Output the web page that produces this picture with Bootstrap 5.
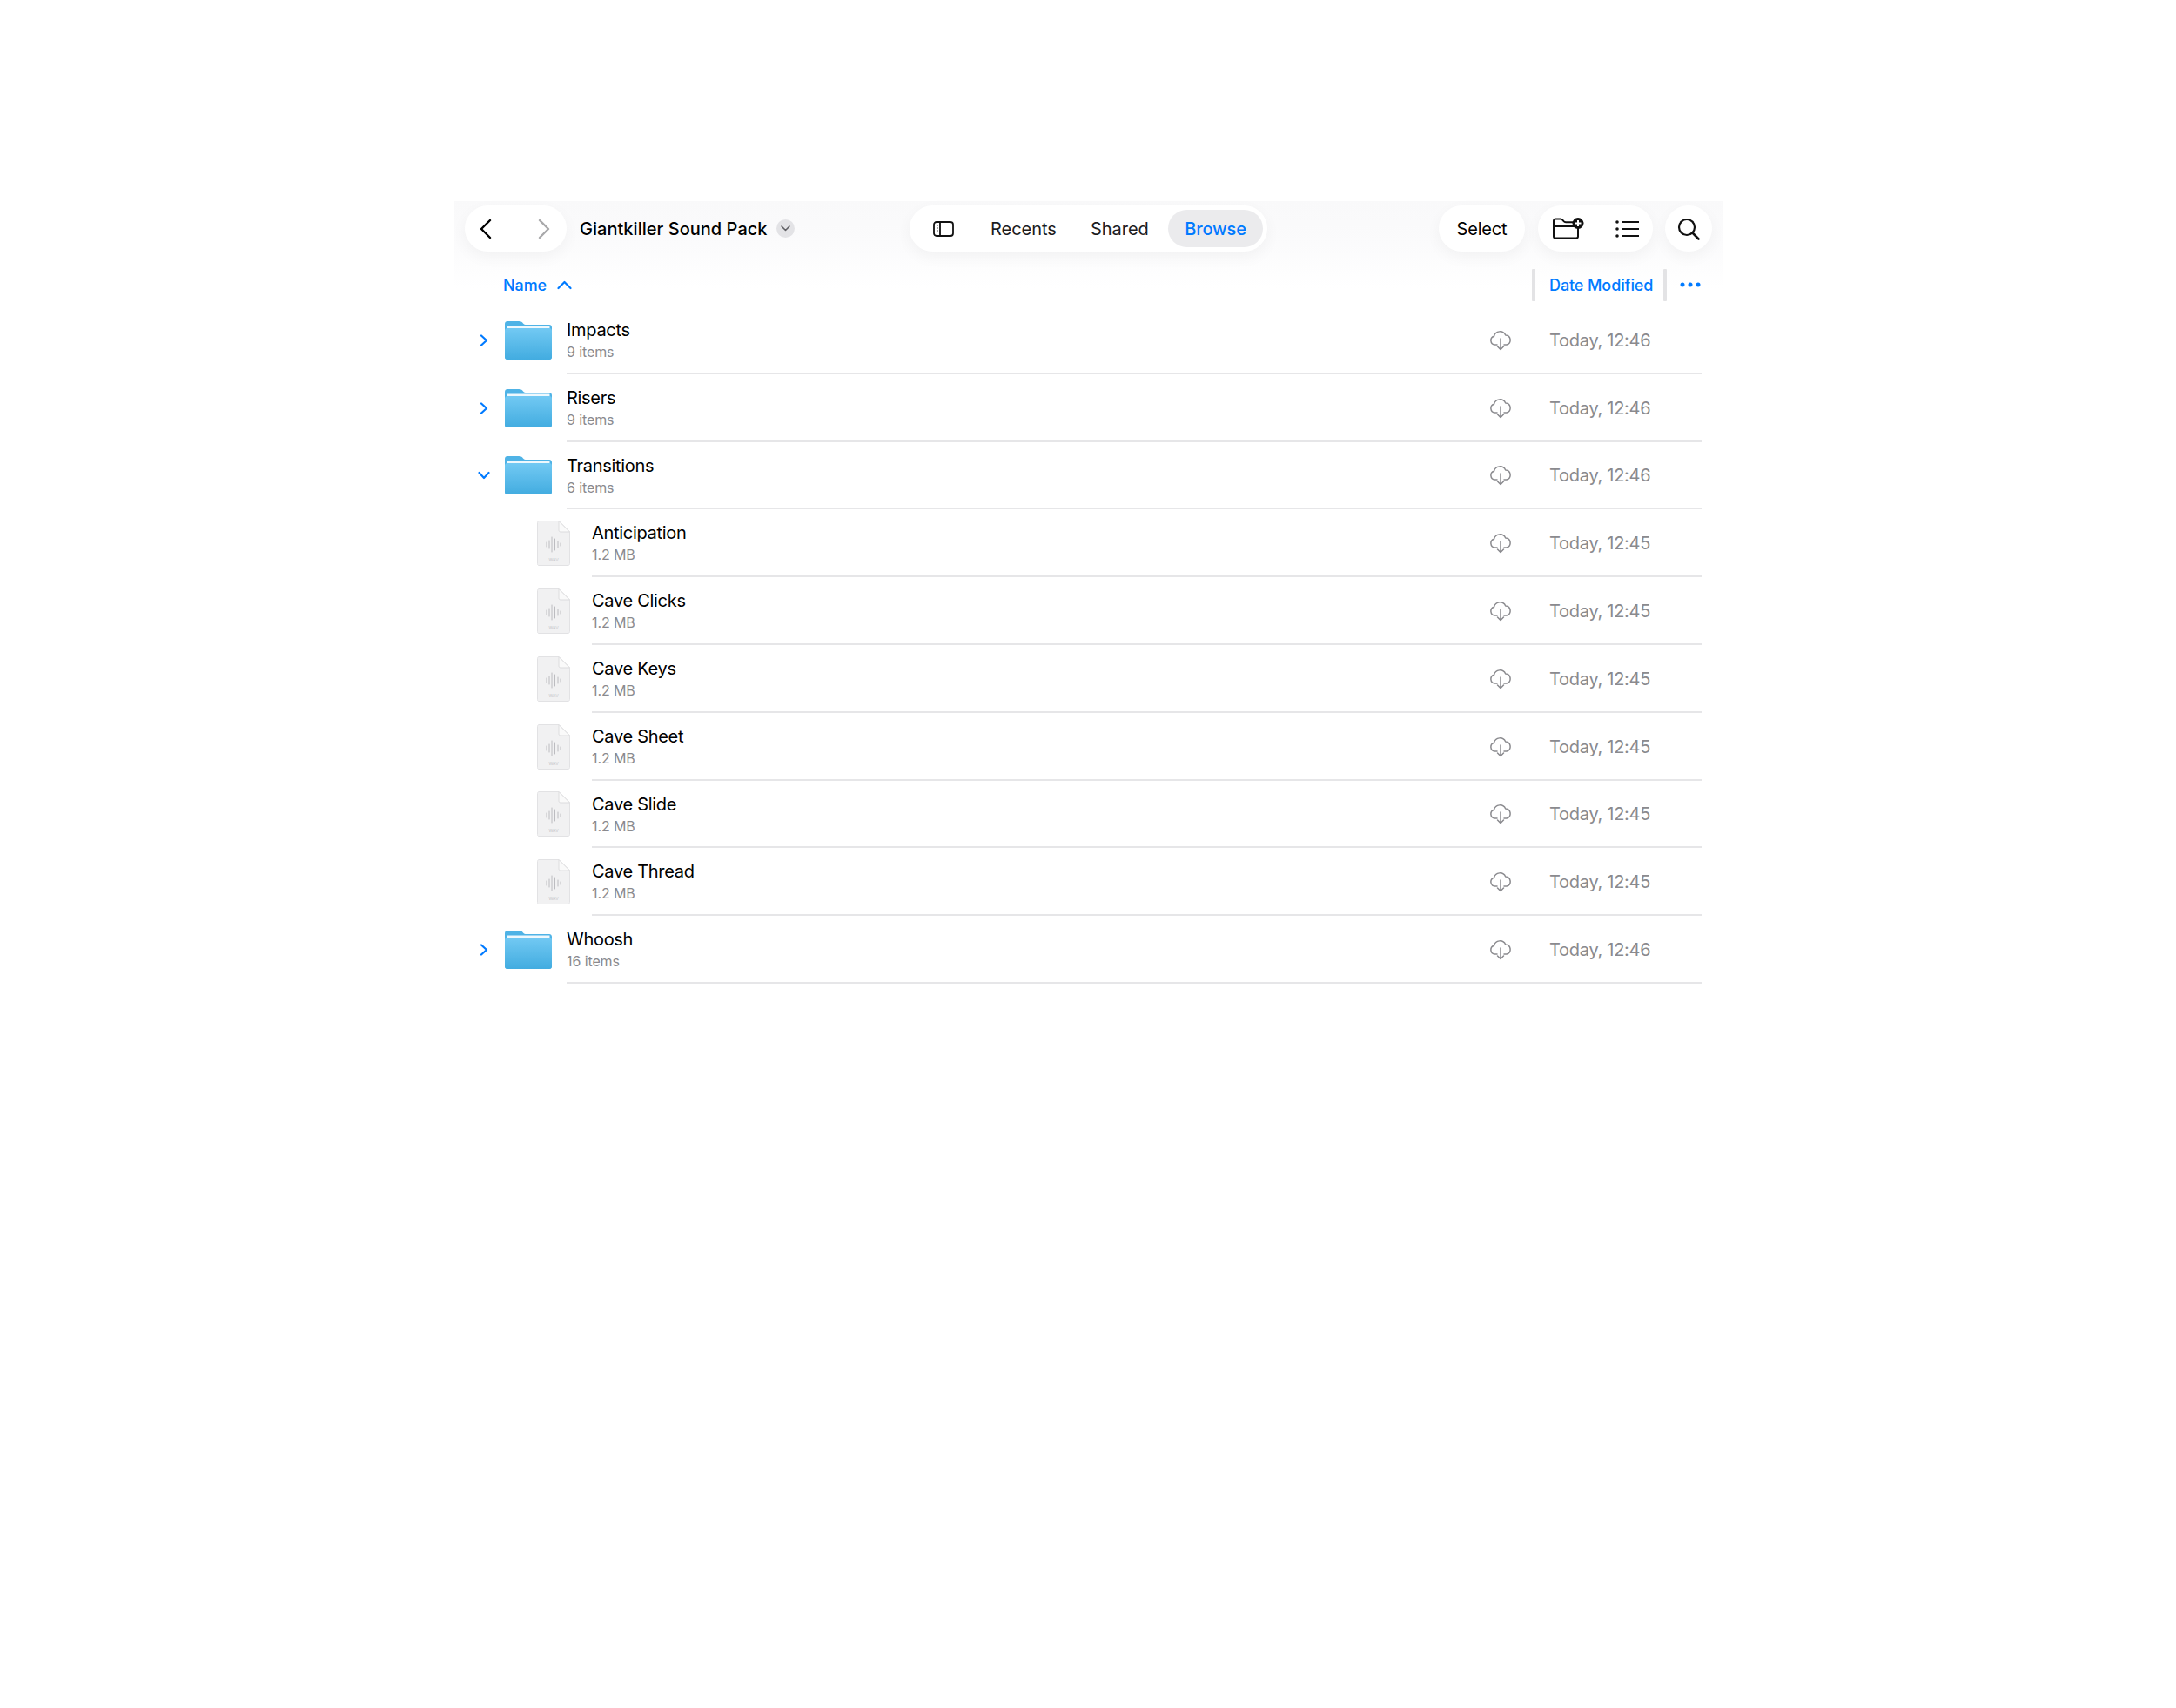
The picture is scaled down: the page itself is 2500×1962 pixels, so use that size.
<!DOCTYPE html>
<html lang="en"><head><meta charset="utf-8"><title>Files</title>
<link href="https://cdn.jsdelivr.net/npm/bootstrap@5.3.0/dist/css/bootstrap.min.css" rel="stylesheet">
<style>
body{background:#fff;font-family:Inter,"Liberation Sans",sans-serif;color:#000;-webkit-font-smoothing:antialiased}
.fp-panel{width:1457px;margin:231px 0 0 522px}
.fp-head{background:linear-gradient(#f9f9fa 0,#fbfbfc 50%,#fff 100%);height:100px;margin-bottom:-100px;}
.fp-bar{height:63px;padding:5px 12px 0;position:relative}
.fp-pill{height:53px;background:#fff;border-radius:27px;box-shadow:0 6px 18px rgba(0,0,0,.045)}
.fp-back{width:117px;padding:0 19px 0 17px}
.fp-title{font-size:20px;font-weight:500;margin-left:15px;letter-spacing:.03px}
.fp-caret{width:21px;height:21px;border-radius:50%;background:#e3e3e6;margin-left:10px}
.fp-left{width:511px}
.fp-mid{width:411px;padding:0 5px 0 27px;font-size:20px;letter-spacing:-.02px;font-weight:400;color:#1c1c1e}
.fp-mid .fp-tab1{margin-left:42px}.fp-mid .fp-tab2{margin-left:39px}
.fp-sel{margin-left:auto;background:#ebebed;color:#007aff;height:43px;width:109px;border-radius:22px;font-weight:500;letter-spacing:-.1px}
.fp-select{width:99px;font-size:20px;font-weight:400;letter-spacing:-.2px}
.fp-acts{width:132px;margin-left:15px;padding:0 16px 0 17px}
.fp-find{width:54px;margin-left:14px}
.fp-right{margin-left:auto}
.fp-cols{height:58px;padding-top:8px;position:relative;font-size:18px;font-weight:500;color:#007aff;letter-spacing:-.1px}
.fp-name{margin-left:56px}
.fp-arrow{margin-left:12px}
.fp-rule{width:4px;height:37px;background:#e3e3e5;border-radius:1px}
.fp-date{width:147px;padding-left:16px}
.fp-dots{margin-left:15px;margin-right:25px}
.fp-row{height:77.8px;position:relative}
.fp-toggle{width:58px;padding-left:29px;flex:none}
.fp-open{margin-left:-2px}
.fp-info{flex:1;height:100%;margin-right:24px;border-bottom:2px solid #e6e6e8;margin-left:17px}
.fp-child .fp-toggle{width:95px}
.fp-child .fp-info{margin-left:25px}
.fp-label{font-size:20px;line-height:24px;letter-spacing:-.3px;margin-top:15px}
.fp-sub{font-size:16px;line-height:20px;color:#8a8a8e;margin-top:3px;letter-spacing:-.1px}
.fp-cloud{margin-left:auto;margin-right:43px;margin-top:2px}
.fp-when{width:175px;font-size:20px;color:#8a8a8e;letter-spacing:-.28px;padding-top:2px}
.fp-wavtag{font-size:5px;fill:#c4c4c8;font-family:Inter,sans-serif}
</style></head><body>
<svg width="0" height="0" class="d-block"><defs>
<linearGradient id="fgr" x1="0" y1="0" x2="0" y2="1"><stop offset="0" stop-color="#72c9f3"/><stop offset="1" stop-color="#42ace0"/></linearGradient>
<symbol id="folder" viewBox="0 0 54 44"><path d="M3 0h13c3 0 4 1 5 2.500 1 1.500 2 1.500 4 1.500h26c1.700 0 3 1.300 3 3v34c0 1.700-1.300 3-3 3H3c-1.700 0-3-1.300-3-3V3c0-1.700 1.300-3 3-3z" fill="#4fb3e6"/><path d="M2.500 5.500h49v3h-49z" fill="#eef8fd"/><path d="M3 8h48c1.700 0 3 1.300 3 3v30c0 1.700-1.300 3-3 3H3c-1.700 0-3-1.300-3-3V11c0-1.700 1.300-3 3-3z" fill="url(#fgr)"/></symbol>
<symbol id="wav" viewBox="0 0 38 52"><path d="M2 .5h23L37.500 13v36.500c0 1-.8 2-2 2H2c-1 0-1.500-1-1.500-2v-47c0-1 .7-2 1.500-2z" fill="#f1f1f2" stroke="#e2e2e4"/><path d="M25 .5V11c0 1.200.8 2 2 2h10.500z" fill="#fafafa" stroke="#dcdcde"/><path d="M11 25v5M14 23v9M17 19v17M20.500 21v13M24 24v7M27 26v3" stroke="#bcbcc0" stroke-width="1" stroke-linecap="round" fill="none"/><text class="fp-wavtag" x="19" y="47" text-anchor="middle">WAV</text></symbol>
<symbol id="cloud" viewBox="0 0 26 24"><path d="M9 17H6.500A5 5 0 0 1 5.500 7.200 7 7 0 0 1 18.700 6 5.600 5.600 0 0 1 20 17h-3M13 10v12.500M9.500 19l3.500 3.500 3.500-3.500" fill="none" stroke="#8a8a8e" stroke-width="1.500" stroke-linecap="round" stroke-linejoin="round"/></symbol>
<symbol id="cr" viewBox="0 0 10 14"><path d="M2 1.500 8 7l-6 5.500" fill="none" stroke="#007aff" stroke-width="2.200" stroke-linecap="round" stroke-linejoin="round"/></symbol>
</defs></svg>
<main class="fp-panel">
<div class="fp-head"></div>
<div class="fp-bar d-flex align-items-start">
  <div class="fp-left d-flex align-items-center">
    <div class="fp-pill fp-back d-flex align-items-center justify-content-between">
      <svg width="14" height="24" viewBox="0 0 14 24"><path d="M12 2 2 12l10 10" fill="none" stroke="#000" stroke-width="2.400" stroke-linecap="round" stroke-linejoin="round"/></svg>
      <svg width="14" height="24" viewBox="0 0 14 24"><path d="m2 2 10 10L2 22" fill="none" stroke="#a9a9ab" stroke-width="2.400" stroke-linecap="round" stroke-linejoin="round"/></svg>
    </div>
    <span class="fp-title">Giantkiller Sound Pack</span>
    <span class="fp-caret d-flex align-items-center justify-content-center"><svg width="11" height="7" viewBox="0 0 11 7"><path d="m1 1 4.500 4.500L10 1" fill="none" stroke="#5f5f63" stroke-width="1.500" stroke-linecap="round" stroke-linejoin="round"/></svg></span>
  </div>
  <nav class="fp-pill fp-mid d-flex align-items-center">
    <svg width="24" height="18" viewBox="0 0 24 18"><rect x="1" y="1" width="22" height="16" rx="3" fill="none" stroke="#111" stroke-width="1.800"/><path d="M8 1v16" stroke="#111" stroke-width="1.800"/><path d="M4 5h1.500M4 8h1.500M4 11h1.500" stroke="#111" stroke-width="1.500"/></svg>
    <span class="fp-tab1">Recents</span><span class="fp-tab2">Shared</span>
    <span class="fp-sel d-flex align-items-center justify-content-center">Browse</span>
  </nav>
  <div class="fp-right d-flex">
    <div class="fp-pill fp-select d-flex align-items-center justify-content-center">Select</div>
    <div class="fp-pill fp-acts d-flex align-items-center justify-content-between">
      <svg width="36" height="25" viewBox="0 0 36 25"><path d="M29 10v11.500a2 2 0 0 1-2 2H3a2 2 0 0 1-2-2V3.500a2 2 0 0 1 2-2h6c2 0 2.500 1 3.500 2.500.7 1 1.200 1.200 2.500 1.200h9M1 10h24" fill="none" stroke="#111" stroke-width="2"/><circle cx="29" cy="6.500" r="6.500" fill="#111"/><path d="M29 3v7M25.500 6.500h7" stroke="#fff" stroke-width="2"/></svg>
      <svg width="27" height="20" viewBox="0 0 27 20"><circle cx="2" cy="2" r="1.800" fill="#111"/><circle cx="2" cy="10" r="1.800" fill="#111"/><circle cx="2" cy="18" r="1.800" fill="#111"/><path d="M7 2h20M7 10h20M7 18h20" stroke="#111" stroke-width="2"/></svg>
    </div>
    <div class="fp-pill fp-find d-flex align-items-center justify-content-center">
      <svg width="26" height="26" viewBox="0 0 26 26"><circle cx="11" cy="11" r="9" fill="none" stroke="#111" stroke-width="2.200"/><path d="m17.500 17.500 7 7" stroke="#111" stroke-width="2.600" stroke-linecap="round"/></svg>
    </div>
  </div>
</div>
<div class="fp-cols d-flex align-items-center">
  <span class="fp-name">Name</span>
  <svg class="fp-arrow" width="17" height="11" viewBox="0 0 17 11"><path d="m1.500 9 7-7 7 7" fill="none" stroke="#007aff" stroke-width="2.200" stroke-linecap="round" stroke-linejoin="round"/></svg>
  <span class="fp-rule ms-auto"></span>
  <span class="fp-date">Date Modified</span>
  <span class="fp-rule"></span>
  <svg class="fp-dots" width="24" height="6" viewBox="0 0 24 6"><circle cx="3" cy="3" r="2.500" fill="#007aff"/><circle cx="12" cy="3" r="2.500" fill="#007aff"/><circle cx="21" cy="3" r="2.500" fill="#007aff"/></svg>
</div>
<section id="fp-list">
<div class="fp-row d-flex align-items-center"><div class="fp-toggle"><svg class="d-block" width="10" height="14"><use href="#cr"/></svg></div><svg width="54" height="44"><use href="#folder"/></svg><div class="fp-info d-flex align-items-start"><div><div class="fp-label">Impacts</div><div class="fp-sub">9 items</div></div><svg class="fp-cloud align-self-center" width="26" height="24"><use href="#cloud"/></svg><div class="fp-when align-self-center">Today, 12:46</div></div></div>
<div class="fp-row d-flex align-items-center"><div class="fp-toggle"><svg class="d-block" width="10" height="14"><use href="#cr"/></svg></div><svg width="54" height="44"><use href="#folder"/></svg><div class="fp-info d-flex align-items-start"><div><div class="fp-label">Risers</div><div class="fp-sub">9 items</div></div><svg class="fp-cloud align-self-center" width="26" height="24"><use href="#cloud"/></svg><div class="fp-when align-self-center">Today, 12:46</div></div></div>
<div class="fp-row d-flex align-items-center"><div class="fp-toggle"><svg class="d-block fp-open" width="14" height="10" viewBox="0 0 14 10"><path d="m1.500 2 5.500 6 5.500-6" fill="none" stroke="#007aff" stroke-width="2.200" stroke-linecap="round" stroke-linejoin="round"/></svg></div><svg width="54" height="44"><use href="#folder"/></svg><div class="fp-info d-flex align-items-start"><div><div class="fp-label">Transitions</div><div class="fp-sub">6 items</div></div><svg class="fp-cloud align-self-center" width="26" height="24"><use href="#cloud"/></svg><div class="fp-when align-self-center">Today, 12:46</div></div></div>
<div class="fp-row fp-child d-flex align-items-center"><div class="fp-toggle"></div><svg width="38" height="52"><use href="#wav"/></svg><div class="fp-info d-flex align-items-start"><div><div class="fp-label">Anticipation</div><div class="fp-sub">1.2 MB</div></div><svg class="fp-cloud align-self-center" width="26" height="24"><use href="#cloud"/></svg><div class="fp-when align-self-center">Today, 12:45</div></div></div>
<div class="fp-row fp-child d-flex align-items-center"><div class="fp-toggle"></div><svg width="38" height="52"><use href="#wav"/></svg><div class="fp-info d-flex align-items-start"><div><div class="fp-label">Cave Clicks</div><div class="fp-sub">1.2 MB</div></div><svg class="fp-cloud align-self-center" width="26" height="24"><use href="#cloud"/></svg><div class="fp-when align-self-center">Today, 12:45</div></div></div>
<div class="fp-row fp-child d-flex align-items-center"><div class="fp-toggle"></div><svg width="38" height="52"><use href="#wav"/></svg><div class="fp-info d-flex align-items-start"><div><div class="fp-label">Cave Keys</div><div class="fp-sub">1.2 MB</div></div><svg class="fp-cloud align-self-center" width="26" height="24"><use href="#cloud"/></svg><div class="fp-when align-self-center">Today, 12:45</div></div></div>
<div class="fp-row fp-child d-flex align-items-center"><div class="fp-toggle"></div><svg width="38" height="52"><use href="#wav"/></svg><div class="fp-info d-flex align-items-start"><div><div class="fp-label">Cave Sheet</div><div class="fp-sub">1.2 MB</div></div><svg class="fp-cloud align-self-center" width="26" height="24"><use href="#cloud"/></svg><div class="fp-when align-self-center">Today, 12:45</div></div></div>
<div class="fp-row fp-child d-flex align-items-center"><div class="fp-toggle"></div><svg width="38" height="52"><use href="#wav"/></svg><div class="fp-info d-flex align-items-start"><div><div class="fp-label">Cave Slide</div><div class="fp-sub">1.2 MB</div></div><svg class="fp-cloud align-self-center" width="26" height="24"><use href="#cloud"/></svg><div class="fp-when align-self-center">Today, 12:45</div></div></div>
<div class="fp-row fp-child d-flex align-items-center"><div class="fp-toggle"></div><svg width="38" height="52"><use href="#wav"/></svg><div class="fp-info d-flex align-items-start"><div><div class="fp-label">Cave Thread</div><div class="fp-sub">1.2 MB</div></div><svg class="fp-cloud align-self-center" width="26" height="24"><use href="#cloud"/></svg><div class="fp-when align-self-center">Today, 12:45</div></div></div>
<div class="fp-row d-flex align-items-center"><div class="fp-toggle"><svg class="d-block" width="10" height="14"><use href="#cr"/></svg></div><svg width="54" height="44"><use href="#folder"/></svg><div class="fp-info d-flex align-items-start"><div><div class="fp-label">Whoosh</div><div class="fp-sub">16 items</div></div><svg class="fp-cloud align-self-center" width="26" height="24"><use href="#cloud"/></svg><div class="fp-when align-self-center">Today, 12:46</div></div></div>
</section>
</main>
<script src="https://cdn.jsdelivr.net/npm/bootstrap@5.3.0/dist/js/bootstrap.bundle.min.js"></script>
</body></html>
